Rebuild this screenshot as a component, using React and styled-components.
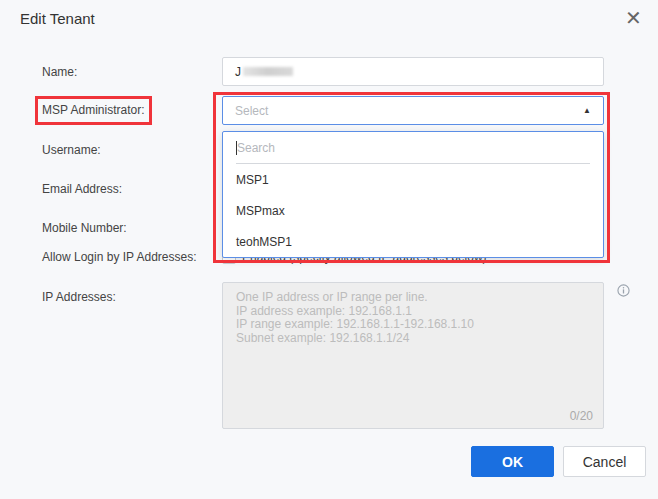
import React from 'react';
import styled, { createGlobalStyle } from 'styled-components';

const Global = createGlobalStyle`
  body { margin: 0; background: #f7f8fa; font-family: Arial, "Liberation Sans", sans-serif; color: #333; }
`;

const Dialog = styled.div`
  width: 658px; height: 499px; position: relative; box-sizing: border-box;
  background: #f7f8fa; padding: 8px 0 0 20px;
`;
const Header = styled.div`
  display: flex; justify-content: space-between; align-items: center;
  padding-right: 16px; height: 20px;
`;
const Title = styled.div`font-size: 15px; color: #333;`;
const Close = styled.div`font-size: 20px; color: #666; line-height: 1;`;

const Form = styled.div`
  display: grid; grid-template-columns: 180px 382px 30px;
  grid-template-rows: 39px 39px 39px 39px 39px 20px 162px;
  margin: 24px 0 0 22px; align-items: center; font-size: 12px;
`;
const Label = styled.div`
  color: #444; align-self: ${p => (p.top ? 'start' : 'center')};
  padding-top: ${p => (p.top ? '23px' : 0)};
`;
const Cell = styled.div`position: relative; align-self: ${p => (p.top ? 'end' : 'center')};`;
const Input = styled.div`
  height: 29px; box-sizing: border-box; border: 1px solid ${p => (p.focus ? '#5b8ee6' : '#d5d8dd')};
  background: #fff; border-radius: 2px; display: flex; align-items: center;
  padding: 0 12px; font-size: 12px; color: ${p => (p.muted ? '#b5b8bd' : '#333')};
`;
const Caret = styled.span`margin-left: auto; font-size: 8px; color: #333;`;
const Blur = styled.span`
  display: inline-block; width: 50px; height: 9px; margin-left: 2px;
  background: linear-gradient(90deg, #e4e4e4, #cfcfcf, #d9d9d9); filter: blur(1.5px);
`;
const Highlight = styled.div`
  position: absolute; border: 3px solid #f0343a; box-sizing: border-box; pointer-events: none;
`;
const LabelBox = styled.span`
  display: inline-block; border: 3px solid #f0343a; padding: 4px 5px 5px 4px; margin-left: -7px;
`;
const Menu = styled.div`
  position: absolute; top: 35px; left: 0; width: 382px; height: 127px; box-sizing: border-box;
  background: #fff; border: 1px solid #5b8ee6; border-radius: 2px; padding: 0 13px;
  box-shadow: 0 2px 8px rgba(0,0,0,0.12); z-index: 2;
`;
const Search = styled.div`
  height: 31px; border-bottom: 1px solid #d5d8dd; display: flex; align-items: center;
  color: #b5b8bd;
  &::before { content: ''; width: 1px; height: 14px; background: #333; }
`;
const Item = styled.div`height: 31px; display: flex; align-items: center; color: #333;`;
const Check = styled.div`display: flex; align-items: center; gap: 6px; color: #444;`;
const Box = styled.span`
  width: 12px; height: 12px; border: 1px solid #c8ccd2; background: #fff; border-radius: 2px;
`;
const Area = styled.div`
  height: 147px; box-sizing: border-box; background: #eeeeee; border: 1px solid #d5d8dd;
  border-radius: 2px; padding: 8px 13px; color: #bcbcbc; line-height: 13.6px; position: relative;
`;
const Count = styled.span`position: absolute; right: 10px; bottom: 4px; color: #aaa;`;
const Info = styled.div`align-self: start; padding: 17px 0 0 13px;`;
const Footer = styled.div`
  display: flex; justify-content: flex-end; gap: 9px; padding-right: 12px; margin-top: 17px;
`;
const Button = styled.button`
  width: 83px; height: 31px; border-radius: 2px; font-size: 14px; font-family: inherit;
  border: 1px solid ${p => (p.primary ? '#1a6fe0' : '#d5d8dd')};
  background: ${p => (p.primary ? '#1a6fe0' : '#fff')};
  color: ${p => (p.primary ? '#fff' : '#333')}; font-weight: ${p => (p.primary ? 'bold' : 'normal')};
`;

export default function App() {
  return (
    <Dialog>
      <Global />
      <Header><Title>Edit Tenant</Title><Close>✕</Close></Header>
      <Form>
        <Label>Name:</Label>
        <Cell><Input>J<Blur /></Input></Cell><div />
        <Label><LabelBox>MSP Administrator:</LabelBox></Label>
        <Cell>
          <Input focus muted>Select<Caret>▲</Caret></Input>
          <Menu>
            <Search>Search</Search>
            <Item>MSP1</Item>
            <Item>MSPmax</Item>
            <Item>teohMSP1</Item>
          </Menu>
          <Highlight style={{ left: -9, top: -4, width: 397, height: 171, zIndex: 3 }} />
        </Cell><div />
        <Label>Username:</Label><Cell /><div />
        <Label>Email Address:</Label><Cell /><div />
        <Label>Mobile Number:</Label><Cell /><div />
        <Label>Allow Login by IP Addresses:</Label>
        <Cell><Check><Box />Enabled (specify allowed IP addresses below)</Check></Cell><div />
        <Label top>IP Addresses:</Label>
        <Cell top>
          <Area>
            One IP address or IP range per line.<br />
            IP address example: 192.168.1.1<br />
            IP range example: 192.168.1.1-192.168.1.10<br />
            Subnet example: 192.168.1.1/24
            <Count>0/20</Count>
          </Area>
        </Cell>
        <Info>
          <svg width="13" height="13" viewBox="0 0 14 14">
            <circle cx="7" cy="7" r="6" fill="none" stroke="#9aa3ad" strokeWidth="1.2" />
            <rect x="6.3" y="5.8" width="1.4" height="4.4" fill="#9aa3ad" />
            <circle cx="7" cy="4" r="0.8" fill="#9aa3ad" />
          </svg>
        </Info>
      </Form>
      <Footer><Button primary>OK</Button><Button>Cancel</Button></Footer>
    </Dialog>
  );
}
